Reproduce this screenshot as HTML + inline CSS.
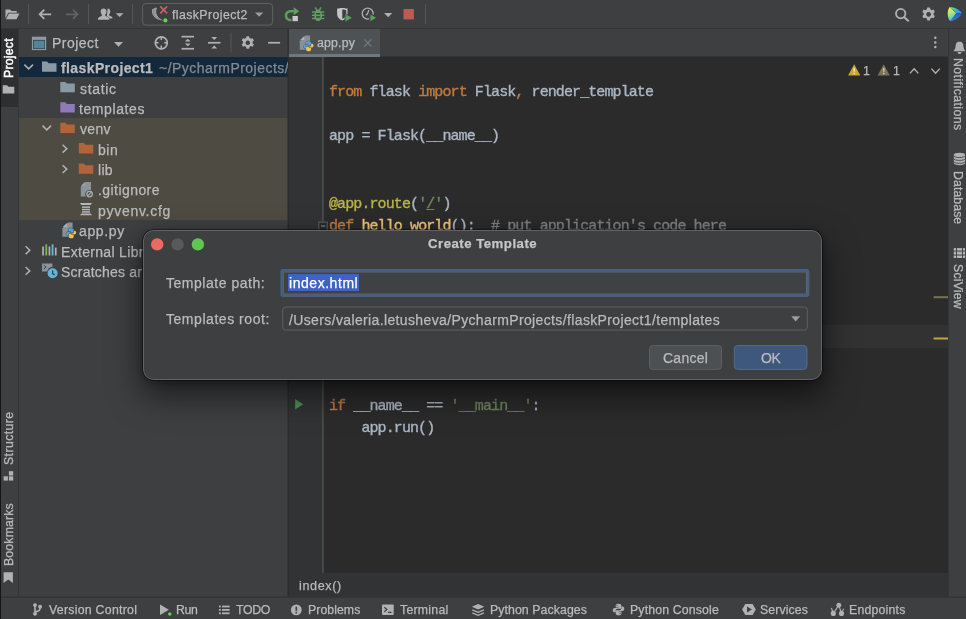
<!DOCTYPE html>
<html lang="en"><head><meta charset="utf-8"><title>flaskProject1 – app.py</title>
<style>
html,body{margin:0;padding:0;overflow:hidden}
html{width:966px;height:619px;background:#3d3f41}
body{width:966px;height:619px;overflow:hidden;background:#3d3f41;position:relative;font-family:"Liberation Sans",sans-serif;color:#bbbbbb}
.b{position:absolute}
.t{position:absolute;white-space:pre;line-height:20px;height:20px;will-change:transform;-webkit-text-stroke:0.25px}
.m{position:absolute;white-space:pre;font-family:"Liberation Mono",monospace;font-size:15px;letter-spacing:-0.9px;line-height:22.44px;height:22.44px;color:#acb7c5;left:328.5px;will-change:transform;-webkit-text-stroke:0.35px}
svg{position:absolute;left:0;top:0;overflow:visible}
</style></head><body>
<div class="b" style="left:0px;top:0px;width:1px;height:619px;background:#151516;"></div>
<div class="b" style="left:0px;top:28px;width:966px;height:1px;background:#343638;"></div>
<div class="b" style="left:1px;top:29px;width:17px;height:77.6px;background:#2d2f30;"></div>
<div class="b" style="left:18px;top:29px;width:1px;height:568px;background:#333637;"></div>
<div class="b" style="left:19px;top:56.8px;width:268.5px;height:20.38px;background:#14283c;"></div>
<div class="b" style="left:19px;top:117.94px;width:268.5px;height:101.9px;background:#4e4b42;"></div>
<div class="b" style="left:288px;top:29px;width:92px;height:25px;background:#4f5254;"></div>
<div class="b" style="left:288px;top:54px;width:92px;height:3px;background:#70787f;"></div>
<div class="b" style="left:380px;top:56px;width:568.5px;height:1px;background:#323435;"></div>
<div class="b" style="left:288px;top:57px;width:660px;height:516px;background:#2b2b2b;"></div>
<div class="b" style="left:288px;top:57px;width:34.5px;height:516px;background:#313335;"></div>
<div class="b" style="left:323.4px;top:325.2px;width:625.1px;height:22.6px;background:#323232;"></div>
<div class="b" style="left:288px;top:573px;width:660px;height:24px;background:#313335;"></div>
<div class="b" style="left:948px;top:29px;width:1px;height:568px;background:#333537;"></div>
<div class="b" style="left:0px;top:0px;width:1px;height:619px;background:#151516;"></div>
<div class="m" style="top:81.54px"><span style="color:#c07c41">from</span> flask <span style="color:#c07c41">import</span> Flask<span style="color:#c07c41">,</span> render_template</div>
<div class="m" style="top:126.42px">app = Flask(__name__)</div>
<div class="m" style="top:193.74px"><span style="color:#bab547">@app.route</span>(<span style="color:#70865e">&#x27;</span><span style="color:#70865e;text-decoration:underline">/</span><span style="color:#70865e">&#x27;</span>)</div>
<div class="m" style="top:216.18px"><span style="color:#c07c41">def</span> <span style="color:#f6c87b">hello_world</span>():  <span style="color:#808080"># put application&#x27;s code here</span></div>
<div class="m" style="top:238.62px">    <span style="color:#c07c41">return </span><span style="color:#70865e">&#x27;Hello World!&#x27;</span></div>
<div class="m" style="top:305.94px"><span style="color:#bab547">@app.route</span>(<span style="color:#70865e">&#x27;/index&#x27;</span>)</div>
<div class="m" style="top:328.38px"><span style="color:#c07c41">def</span> <span style="color:#f6c87b">index</span>():</div>
<div class="m" style="top:350.82px">    <span style="color:#c07c41">return </span>render_template(<span style="color:#70865e">&#x27;index.html&#x27;</span>)</div>
<div class="m" style="top:395.70px"><span style="color:#c07c41">if</span> __name__ == <span style="color:#70865e">&#x27;__main__&#x27;</span>:</div>
<div class="m" style="top:418.14px">    app.run()</div>
<svg width="966" height="619" viewBox="0 0 966 619">
<defs>
<linearGradient id="spA" x1="0.2" y1="0" x2="0.5" y2="1"><stop offset="0" stop-color="#f4f04a"/><stop offset="0.45" stop-color="#b4e37c"/><stop offset="1" stop-color="#3cc0e2"/></linearGradient><linearGradient id="spB" x1="0" y1="0" x2="1" y2="0.6"><stop offset="0" stop-color="#9be45e"/><stop offset="0.5" stop-color="#45b8b4"/><stop offset="1" stop-color="#3194e4"/></linearGradient><linearGradient id="spC" x1="0.3" y1="0" x2="0.2" y2="1"><stop offset="0" stop-color="#2a5cbd"/><stop offset="1" stop-color="#2f86dc"/></linearGradient><linearGradient id="spg" x1="0" y1="0" x2="1" y2="0.35"><stop offset="0" stop-color="#d8e84a"/><stop offset="0.3" stop-color="#7fd46a"/><stop offset="0.55" stop-color="#1fb3a6"/><stop offset="0.8" stop-color="#2a86d8"/><stop offset="1" stop-color="#2a6fd0"/></linearGradient>
<g id="fold"><path d="M0,1.2 h5 l1.6,1.7 h7.9 v8.6 h-14.5 z"/></g>
<g id="chevD"><path d="M0,0 l4.3,4.3 l4.3,-4.3" fill="none" stroke="#afb1b3" stroke-width="1.5"/></g>
<g id="chevR"><path d="M0,0 l4.2,3.9 l-4.2,3.9" fill="none" stroke="#afb1b3" stroke-width="1.5"/></g>
<g id="py"><path d="M4.9,0 C3.1,0 2.5,0.8 2.5,1.8 V3.2 H5 V3.7 H1.6 C0.5,3.7 0,4.6 0,5.6 C0,6.6 0.5,7.5 1.6,7.5 H2.5 V6.1 C2.5,5.1 3.3,4.4 4.3,4.4 H6.6 C7.3,4.4 7.5,3.8 7.5,3.2 V1.8 C7.5,0.8 6.7,0 4.9,0 Z" fill="#609dd3"/><path d="M4.9,0 C3.1,0 2.5,0.8 2.5,1.8 V3.2 H5 V3.7 H1.6 C0.5,3.7 0,4.6 0,5.6 C0,6.6 0.5,7.5 1.6,7.5 H2.5 V6.1 C2.5,5.1 3.3,4.4 4.3,4.4 H6.6 C7.3,4.4 7.5,3.8 7.5,3.2 V1.8 C7.5,0.8 6.7,0 4.9,0 Z" fill="#eac450" transform="translate(10,10) rotate(180)"/></g>
<g id="pyfile"><path d="M5.6,0 h4.65 v14.2 h-10.25 v-8.6 z" fill="#87929a" stroke="none"/><path d="M0.4,4.5 h4.1 v-4.1 z" fill="#a9b2b8" stroke="none"/><g transform="translate(3.8,5.6) scale(1.0)" stroke-width="0.9" paint-order="stroke"><use href="#py"/></g></g>
<g id="gear"><path d="M-1.3,-6.6 h2.6 l0.35,1.75 a5,5 0 0 1 1.45,0.85 l1.7,-0.6 l1.3,2.25 l-1.35,1.15 a5,5 0 0 1 0,1.7 l1.35,1.15 l-1.3,2.25 l-1.7,-0.6 a5,5 0 0 1 -1.45,0.85 l-0.35,1.75 h-2.6 l-0.35,-1.75 a5,5 0 0 1 -1.45,-0.85 l-1.7,0.6 l-1.3,-2.25 l1.35,-1.15 a5,5 0 0 1 0,-1.7 l-1.35,-1.15 l1.3,-2.25 l1.7,0.6 a5,5 0 0 1 1.45,-0.85 z M0,-2.3 a2.3,2.3 0 1 0 0.001,0 z" fill="#afb1b3" fill-rule="evenodd"/></g>
</defs>

<rect x="287.5" y="29" width="1.35" height="568" fill="#2c2c2d"/>
<rect x="1" y="596.4" width="965" height="1.5" fill="#333537"/>
<!-- ===== main toolbar ===== -->
<g fill="#afb1b3">
<path d="M5.5,9.4 h4.6 l1.4,1.5 h5.3 v1.9 h-8.6 l-2.7,5.6 z"/>
<path d="M8.9,13.6 h10.6 l-3,5.6 h-10.6 z"/>
</g>
<g stroke="#55585a" stroke-width="1"><path d="M28.5,4.3 V24.2 M88.5,4.3 V24.2 M132.5,4.3 V24.2 M425.5,4.3 V24.2"/></g>
<path d="M51.2,14.3 H39.8 M44.3,9.7 L39.6,14.3 L44.3,18.9" fill="none" stroke="#afb1b3" stroke-width="1.8"/>
<path d="M66,14.3 H77.4 M72.9,9.7 L77.6,14.3 L72.9,18.9" fill="none" stroke="#5f6365" stroke-width="1.8"/>
<!-- users -->
<g>
<path d="M107.6,8.5 c1.7,0 2.7,1.2 2.7,2.9 c0,1.3 -0.6,2.4 -1.3,3 c0,0.8 0.4,1.1 1.4,1.5 c1.4,0.6 2.2,1.2 2.2,2.7 h-6 z" fill="#afb1b3"/>
<path d="M103.6,8.5 c1.8,0 2.9,1.3 2.9,3.1 c0,1.4 -0.6,2.6 -1.4,3.2 c0,0.9 0.5,1.3 1.7,1.8 c1.7,0.7 2.6,1.4 2.6,3.1 h-11.6 c0,-1.7 0.9,-2.4 2.6,-3.1 c1.2,-0.5 1.7,-0.9 1.7,-1.8 c-0.8,-0.6 -1.4,-1.8 -1.4,-3.2 c0,-1.8 1.1,-3.1 2.9,-3.1 z" fill="#afb1b3" stroke="#3d3f41" stroke-width="0.9" paint-order="stroke"/>
</g>
<path d="M115.7,13.2 h7.8 l-3.9,3.8 z" fill="#afb1b3"/>
<!-- run config box -->
<rect x="142.6" y="3.5" width="130" height="21.6" rx="3.2" fill="none" stroke="#5f6263" stroke-width="1"/>
<!-- flask horn -->
<path d="M152.4,8.9 c-0.9,2 -0.5,4.6 1,6.8 c2,2.9 5.4,4.6 9.9,4.7 c-3.4,-1.4 -5.6,-3.5 -6.6,-6 c-0.9,-2.3 -0.7,-4.6 0.3,-6.3 c-0.4,-0.5 -1,-0.8 -1.6,-0.7 c-0.5,0.8 -1.7,1.4 -3,1.5 z" fill="#a3a6a8"/>
<path d="M153.6,9.6 c-0.6,1.7 -0.2,3.7 0.9,5.4 c1.3,1.9 3.3,3.3 5.9,4.2" fill="none" stroke="#6b6e70" stroke-width="0.55"/>
<path d="M155.2,8.6 c-0.7,1.9 -0.4,3.9 0.5,5.6" fill="none" stroke="#74777a" stroke-width="0.5"/>
<path d="M160.3,6.4 l6.8,6.9 M167.1,6.4 l-6.8,6.9" stroke="#cb6063" stroke-width="1.7" fill="none"/>
<circle cx="165.4" cy="20.4" r="2.05" fill="#62d64a"/>
<path d="M255,12.4 h8.3 l-4.15,4.3 z" fill="#9a9da1"/>
<!-- rerun -->
<path d="M293.9,11.3 h-3.4 a4.35,4.35 0 1 0 0.9,8.55" fill="none" stroke="#5d9f5c" stroke-width="2.5"/>
<path d="M293.7,7.2 l5.5,4.1 l-5.5,3.9 z" fill="#5d9f5c"/>
<rect x="292.5" y="16" width="5.4" height="5.2" fill="#c9c9c9"/>
<!-- bug -->
<g stroke="#5d9f5c" stroke-width="1.5" fill="none"><path d="M312,12.1 H324.3 M312,15.3 H324.3 M312,18.6 H324.3 M315.2,7.4 L317,10.4 M321,7.4 L319.2,10.4"/></g>
<ellipse cx="318.15" cy="15.4" rx="3.9" ry="5.9" fill="#5d9f5c"/>
<rect x="316.1" y="13" width="4.1" height="1.5" fill="#3d3f41"/><rect x="316.1" y="16.2" width="4.1" height="1.5" fill="#3d3f41"/>
<!-- coverage -->
<path d="M337.1,8.6 c1.6,0 2.4,-0.2 3.1,-0.7 h4.2 c0.7,0.5 1.5,0.7 3.1,0.7 v5.5 c0,3.2 -2.2,5.3 -5.2,6.5 c-3,-1.2 -5.2,-3.3 -5.2,-6.5 z" fill="#c3c5c6"/>
<path d="M342.3,9.4 h1.8 c0.6,0.4 1.3,0.6 2.1,0.6 v4.1 c0,2.2 -1.4,3.8 -3.9,4.9 z" fill="#3d3f41"/>
<path d="M345,13.4 l7.5,4.4 l-7.5,4.5 z" fill="#5d9f5c" stroke="#3d3f41" stroke-width="0.8"/>
<!-- profile -->
<circle cx="367.7" cy="13.6" r="5.5" fill="none" stroke="#afb1b3" stroke-width="1.3"/>
<path d="M368.9,10 L367.5,13.8 L365.9,15.3" fill="none" stroke="#afb1b3" stroke-width="1.2"/>
<path d="M369.8,13.4 l7.5,4.4 l-7.5,4.5 z" fill="#5d9f5c" stroke="#3d3f41" stroke-width="1.2"/>
<path d="M384.1,13.1 h8.2 l-4.1,4.1 z" fill="#afb1b3"/>
<rect x="403.5" y="9" width="10.4" height="10.4" fill="#bf5a52"/>
<!-- search -->
<circle cx="900.7" cy="13.6" r="4.7" fill="none" stroke="#afb1b3" stroke-width="1.8"/>
<path d="M904.2,17.2 L908.7,21.3" stroke="#afb1b3" stroke-width="2" fill="none"/>
<g transform="translate(928.6,14.3) scale(1.03)"><use href="#gear"/></g>
<!-- space logo -->
<path d="M949.6,6.9 C948.3,8.6 947.6,11.3 947.7,14 C947.8,16.7 948.6,19.5 950.2,21.2 L956.3,13.2 Z" fill="url(#spA)"/>
<path d="M949.6,6.9 C954.5,7 959.4,9.6 962.1,13.2 L956.3,13.2 Z" fill="url(#spB)"/>
<path d="M962.1,13.2 C959.6,17.4 954.9,20.6 950.2,21.2 L956.3,13.2 Z" fill="url(#spC)"/>
<!-- ===== project header ===== -->
<rect x="31.9" y="36.7" width="14.3" height="13.4" fill="#8c9aa4"/>
<rect x="33.1" y="39.9" width="11.9" height="9" fill="#3d3f41"/>
<rect x="33.9" y="40.7" width="10.5" height="7.5" fill="#51849d"/>
<path d="M114,42 h9 l-4.5,4.7 z" fill="#afb1b3"/>
<circle cx="161.3" cy="42.8" r="6" fill="none" stroke="#afb1b3" stroke-width="1.7"/>
<path d="M161.3,36.3 V40 M161.3,49.3 V45.6 M154.8,42.8 H158.5 M167.8,42.8 H164.1" stroke="#afb1b3" stroke-width="1.5" fill="none"/>
<g fill="#afb1b3">
<rect x="181.5" y="35.8" width="12.5" height="1.7"/><rect x="181.5" y="47.9" width="12.5" height="1.7"/>
<path d="M187.75,38.8 l2.9,2.7 h-5.8 z M187.75,46.3 l2.9,-2.7 h-5.8 z"/>
<rect x="208" y="41.9" width="12.5" height="1.7"/>
<path d="M214.25,40 l2.9,-3 h-5.8 z M214.25,45.5 l2.9,3 h-5.8 z"/>
<rect x="268.1" y="41.9" width="12" height="1.7"/>
</g>
<path d="M231,32.6 V52.5" stroke="#55585a" stroke-width="1"/>
<g transform="translate(247.8,42.8)"><use href="#gear"/></g>

<!-- ===== tab ===== -->
<g transform="translate(299.8,35.6)" stroke="#4f5254"><use href="#pyfile"/></g>
<path d="M364.3,39.3 l7.1,7.2 M371.4,39.3 l-7.1,7.2" stroke="#6e7d82" stroke-width="1.1" fill="none"/>
<g fill="#afb1b3"><circle cx="935.3" cy="37.8" r="1.25"/><circle cx="935.3" cy="42.4" r="1.25"/><circle cx="935.3" cy="47" r="1.25"/></g>

<!-- ===== inspections widget ===== -->
<path d="M854.2,64.3 l6.1,11.2 h-12.2 z" fill="#cda434"/>
<rect x="853.45" y="67.9" width="1.6" height="3.8" fill="#f3e3b0"/><rect x="853.45" y="72.7" width="1.6" height="1.5" fill="#f3e3b0"/>
<path d="M883.7,64.3 l6.1,11.2 h-12.2 z" fill="#7c745a"/>
<rect x="882.95" y="67.9" width="1.6" height="3.8" fill="#c9c3ad"/><rect x="882.95" y="72.7" width="1.6" height="1.5" fill="#c9c3ad"/>
<path d="M909.9,73.4 l4.2,-4.6 l4.2,4.6" fill="none" stroke="#afb1b3" stroke-width="1.4"/>
<path d="M931.4,68.6 l4.2,4.6 l4.2,-4.6" fill="none" stroke="#afb1b3" stroke-width="1.4"/>

<!-- ===== left strip ===== -->
<path d="M2.7,85.2 h4.3 l1.4,1.5 h5.9 v6.9 h-11.6 z" fill="#afb1b3"/>
<g fill="#afb1b3"><rect x="8.9" y="471.2" width="4.3" height="4.3"/><rect x="3.6" y="476.3" width="4.3" height="4.3"/><rect x="8.9" y="476.3" width="4.3" height="4.3"/></g>
<path d="M3.6,572.2 h9.3 v10.9 l-4.65,-3.6 l-4.65,3.6 z" fill="#afb1b3"/>

<!-- ===== right strip ===== -->
<path d="M959.5,41.6 c-2.4,0 -3.8,1.7 -3.9,4.1 c-0.1,2.3 -0.6,3.6 -1.9,5 v0.5 h11.6 v-0.5 c-1.3,-1.4 -1.8,-2.7 -1.9,-5 c-0.1,-2.4 -1.5,-4.1 -3.9,-4.1 z M957.5,52.1 a2,1.9 0 0 0 4,0 z" fill="#afb1b3"/>
<path d="M953.8,154.7 v8.5 a5.65,2 0 0 0 11.3,0 v-8.5 a5.65,2 0 0 0 -11.3,0 z" fill="#afb1b3"/>
<g stroke="#3d3f41" stroke-width="0.85" fill="none"><path d="M953.6,155.6 a5.8,1.9 0 0 0 11.7,0 M953.6,158.5 a5.8,1.9 0 0 0 11.7,0 M953.6,161.4 a5.8,1.9 0 0 0 11.7,0"/></g>
<g fill="#75787a"><rect x="953.8" y="248.6" width="2.3" height="9"/><rect x="957.0" y="248.6" width="5.0" height="9"/><rect x="962.9" y="248.6" width="2.2" height="9"/></g>
<g fill="#b6b8ba"><rect x="953.8" y="248.2" width="2.3" height="1.95"/><rect x="953.8" y="252.2" width="2.3" height="1.95"/><rect x="953.8" y="256.0" width="2.3" height="1.95"/><rect x="957.0" y="248.2" width="5.0" height="1.95"/><rect x="957.0" y="252.2" width="5.0" height="1.95"/><rect x="957.0" y="256.0" width="5.0" height="1.95"/><rect x="962.9" y="248.2" width="2.2" height="1.95"/><rect x="962.9" y="252.2" width="2.2" height="1.95"/><rect x="962.9" y="256.0" width="2.2" height="1.95"/></g>

<!-- ===== tree ===== -->
<g transform="translate(24.4,64.6)"><use href="#chevD"/></g>
<g transform="translate(42,60.3)" fill="#8a9aa5"><use href="#fold"/></g>
<g transform="translate(60.3,80.7)" fill="#8a9aa5"><use href="#fold"/></g>
<g transform="translate(60.3,101.1)" fill="#8e79b9"><use href="#fold"/></g>
<g transform="translate(42.5,125.6)"><use href="#chevD"/></g>
<g transform="translate(60.3,121.5)" fill="#b1643a"><use href="#fold"/></g>
<g transform="translate(62.6,144.8)"><use href="#chevR"/></g>
<g transform="translate(78.8,141.9)" fill="#b1643a"><use href="#fold"/></g>
<g transform="translate(62.6,165.2)"><use href="#chevR"/></g>
<g transform="translate(78.8,162.3)" fill="#b1643a"><use href="#fold"/></g>
<!-- .gitignore -->
<path d="M85.4,182.1 h5.6 v8.3 a4.3,4.3 0 0 0 -5.3,6.1 h-4.9 v-9.7 z" fill="#8a949b"/><path d="M81,185.8 h3.8 v-3.7 z" fill="#9aa3a9"/>
<circle cx="89.6" cy="194" r="2.75" fill="none" stroke="#a7afb4" stroke-width="1.25"/><path d="M87.7,195.9 l3.8,-3.8" stroke="#a7afb4" stroke-width="1.25"/>
<!-- cfg -->
<g fill="#b4b6b8"><path d="M80,203.1 h12 l-1.4,1.8 h-9.2 z"/><rect x="82" y="206.4" width="8" height="1.5"/><rect x="82" y="208.8" width="8" height="1.5"/><rect x="82" y="211.2" width="8" height="1.5"/><path d="M81.4,213.4 h9.2 l1.4,1.8 h-12 z"/></g>
<!-- app.py -->
<g transform="translate(62.4,222.6)" stroke="#3d3f41"><use href="#pyfile"/></g>
<!-- ext libs -->
<g transform="translate(25.6,246.3)"><use href="#chevR"/></g>
<g><rect x="42.2" y="246.5" width="1.7" height="9" fill="#afb1b3"/><rect x="45.3" y="244.3" width="1.9" height="11.2" fill="#76b353"/><rect x="48.6" y="246.5" width="1.7" height="9" fill="#afb1b3"/><rect x="51.6" y="244.3" width="1.9" height="11.2" fill="#63b4dc"/><rect x="54.9" y="247.6" width="1.7" height="7.9" fill="#afb1b3"/></g>
<!-- scratches -->
<g transform="translate(25.6,267)"><use href="#chevR"/></g>
<path d="M42,263.5 h10.4 v3.6 a5.6,5.6 0 0 0 -5.2,4.4 h-5.2 z" fill="#8a949b"/>
<path d="M43.8,265.2 l2.2,1.9 l-2.2,1.9" stroke="#3d3f41" stroke-width="1" fill="none"/>
<circle cx="52.6" cy="273.3" r="5" fill="#63b4dc"/>
<path d="M52.6,270.3 v3.3 l2.2,1.3" stroke="#3d3f41" stroke-width="1.2" fill="none"/>

<!-- ===== gutter ===== -->
<rect x="933.6" y="296.2" width="14.4" height="2" fill="#7a7258"/><rect x="933.6" y="337.5" width="14.4" height="2" fill="#c9a13a"/>
<rect x="322.1" y="57" width="1.7" height="516" fill="#4d4d4d"/>
<rect x="318.8" y="222.1" width="8.4" height="8.6" fill="#2b2b2b" stroke="#585b5d" stroke-width="1.2"/><path d="M321,226.1 h4.3" stroke="#747474" stroke-width="1.5"/>
<path d="M295.1,399.1 l8.2,5.2 l-8.2,5.2 z" fill="#558f56"/>

<!-- ===== bottom bar ===== -->
<g fill="none" stroke="#afb1b3" stroke-width="1.6"><path d="M35,605.5 V613.5 M35,611.8 c4.6,-0.2 5.1,-2 5.1,-4.6"/></g>
<g fill="#afb1b3"><circle cx="35" cy="605.1" r="1.95"/><circle cx="35" cy="613.8" r="1.95"/><circle cx="40.1" cy="606.8" r="1.95"/></g>
<path d="M160,604.6 l8.9,5.2 l-8.9,5.2 z" fill="#afb1b3"/><circle cx="169.8" cy="613.9" r="2.2" fill="#3d3f41"/><circle cx="169.8" cy="613.9" r="1.75" fill="#62d64a"/>
<g fill="#afb1b3"><rect x="219" y="605.6" width="1.8" height="1.8"/><rect x="222" y="605.6" width="7.6" height="1.8"/><rect x="219" y="609" width="1.8" height="1.8"/><rect x="222" y="609" width="7.6" height="1.8"/><rect x="219" y="612.4" width="1.8" height="1.8"/><rect x="222" y="612.4" width="7.6" height="1.8"/></g>
<circle cx="296.3" cy="609.9" r="5.4" fill="#afb1b3"/><rect x="295.45" y="606.7" width="1.7" height="4" fill="#3d3f41"/><rect x="295.45" y="611.7" width="1.7" height="1.7" fill="#3d3f41"/>
<rect x="382" y="604.5" width="11.7" height="10.6" rx="0.8" fill="#afb1b3"/><path d="M384.3,607.2 l2.6,2.3 l-2.6,2.3 M388,612.3 h3.5" stroke="#3d3f41" stroke-width="1.2" fill="none"/>
<g fill="#afb1b3"><path d="M478.1,604 l6.2,2.7 l-6.2,2.7 l-6.2,-2.7 z"/></g>
<g fill="none" stroke="#afb1b3" stroke-width="1.3"><path d="M472.3,609.8 l5.8,2.5 l5.8,-2.5 M472.3,612.8 l5.8,2.5 l5.8,-2.5"/></g>
<g transform="translate(612.8,603.7) scale(1.15)"><path d="M4.9,0 C3.1,0 2.5,0.8 2.5,1.8 V3.2 H5 V3.7 H1.6 C0.5,3.7 0,4.6 0,5.6 C0,6.6 0.5,7.5 1.6,7.5 H2.5 V6.1 C2.5,5.1 3.3,4.4 4.3,4.4 H6.6 C7.3,4.4 7.5,3.8 7.5,3.2 V1.8 C7.5,0.8 6.7,0 4.9,0 Z" fill="#afb1b3"/><path d="M4.9,0 C3.1,0 2.5,0.8 2.5,1.8 V3.2 H5 V3.7 H1.6 C0.5,3.7 0,4.6 0,5.6 C0,6.6 0.5,7.5 1.6,7.5 H2.5 V6.1 C2.5,5.1 3.3,4.4 4.3,4.4 H6.6 C7.3,4.4 7.5,3.8 7.5,3.2 V1.8 C7.5,0.8 6.7,0 4.9,0 Z" fill="#afb1b3" transform="translate(10,10) rotate(180)"/><circle cx="3.7" cy="1.6" r="0.55" fill="#3d3f41"/><circle cx="6.3" cy="8.4" r="0.55" fill="#3d3f41"/></g>
<path d="M745.3,603.9 h7.3 l3.2,5.6 l-3.2,5.6 h-7.3 l-3.2,-5.6 z" fill="#afb1b3"/><path d="M747,606.4 l4.9,3.1 l-4.9,3.1 z" fill="#3d3f41"/>
<g stroke="#afb1b3" stroke-width="1.1" fill="none"><path d="M833.3,613.4 L838.8,605.3 L841.5,613.4 M831.4,608 L833.3,613.4 M843.6,608.6 L841.5,613.4"/></g>
<g fill="#afb1b3"><circle cx="838.8" cy="605.3" r="2.45"/><circle cx="833.3" cy="613.4" r="2.55"/><circle cx="841.5" cy="613.4" r="2.55"/></g>
</svg>
<div class="t" style="font-size:12.3px;color:#bbbbbb;letter-spacing:0.417px;left:171.70px;top:4.64px;">flaskProject2</div>
<div class="t" style="font-size:14px;color:#bbbbbb;letter-spacing:0.471px;left:52.00px;top:33.25px;">Project</div>
<div class="t" style="font-size:12.3px;color:#bbbbbb;letter-spacing:0.196px;left:317.30px;top:32.94px;">app.py</div>
<div class="t" style="font-size:12.3px;color:#bbbbbb;left:863.40px;top:60.94px;">1</div>
<div class="t" style="font-size:12.3px;color:#bbbbbb;left:893.00px;top:60.94px;">1</div>
<div class="t" style="font-size:12.6px;color:#bbbbbb;letter-spacing:0.618px;left:298.60px;top:576.13px;">index()</div>
<div class="t" style="font-size:14px;color:#bbbbbb;font-weight:bold;letter-spacing:0.395px;left:60.90px;top:58.14px;">flaskProject1</div>
<div class="t" style="font-size:14px;color:#848b91;letter-spacing:0.461px;left:158.60px;top:58.14px;width:128.8px;overflow:hidden;">~/PycharmProjects/</div>
<div class="t" style="font-size:14.0px;color:#bbbbbb;letter-spacing:0.685px;left:79.50px;top:78.52px;">static</div>
<div class="t" style="font-size:14.0px;color:#bbbbbb;letter-spacing:0.588px;left:79.20px;top:98.90px;">templates</div>
<div class="t" style="font-size:14.0px;color:#bbbbbb;letter-spacing:0.343px;left:79.50px;top:119.28px;">venv</div>
<div class="t" style="font-size:14.0px;color:#bbbbbb;letter-spacing:0.559px;left:97.90px;top:139.66px;">bin</div>
<div class="t" style="font-size:14.0px;color:#bbbbbb;letter-spacing:0.297px;left:97.90px;top:160.04px;">lib</div>
<div class="t" style="font-size:14.0px;color:#bbbbbb;letter-spacing:0.434px;left:97.90px;top:180.42px;">.gitignore</div>
<div class="t" style="font-size:14.0px;color:#bbbbbb;letter-spacing:0.713px;left:97.90px;top:200.80px;">pyvenv.cfg</div>
<div class="t" style="font-size:14.0px;color:#bbbbbb;letter-spacing:0.633px;left:79.20px;top:221.18px;">app.py</div>
<div class="t" style="font-size:14.0px;color:#bbbbbb;letter-spacing:0.317px;left:61.20px;top:241.56px;">External Libr</div>
<div class="t" style="font-size:14.0px;color:#bbbbbb;letter-spacing:0.210px;left:61.20px;top:261.94px;">Scratches ar</div>
<div class="t" style="font-size:12.3px;color:#bbbbbb;letter-spacing:0.273px;left:48.80px;top:600.34px;">Version Control</div>
<div class="t" style="font-size:12.3px;color:#bbbbbb;letter-spacing:-0.300px;left:176.00px;top:600.34px;">Run</div>
<div class="t" style="font-size:12.3px;color:#bbbbbb;letter-spacing:-0.300px;left:235.70px;top:600.34px;">TODO</div>
<div class="t" style="font-size:12.3px;color:#bbbbbb;letter-spacing:0.052px;left:307.70px;top:600.34px;">Problems</div>
<div class="t" style="font-size:12.3px;color:#bbbbbb;letter-spacing:0.262px;left:399.80px;top:600.34px;">Terminal</div>
<div class="t" style="font-size:12.3px;color:#bbbbbb;letter-spacing:0.085px;left:489.80px;top:600.34px;">Python Packages</div>
<div class="t" style="font-size:12.3px;color:#bbbbbb;letter-spacing:0.153px;left:629.80px;top:600.34px;">Python Console</div>
<div class="t" style="font-size:12.3px;color:#bbbbbb;letter-spacing:0.107px;left:760.20px;top:600.34px;">Services</div>
<div class="t" style="font-size:12.3px;color:#bbbbbb;letter-spacing:0.201px;left:848.60px;top:600.34px;">Endpoints</div>
<div class="t" style="font-size:12.3px;color:#ffffff;letter-spacing:0.221px;-webkit-text-stroke:0.45px;left:-1.36px;top:77.50px;transform-origin:0 0;transform:rotate(-90deg);">Project</div>
<div class="t" style="font-size:12.3px;color:#bbbbbb;letter-spacing:0.401px;left:-1.36px;top:464.60px;transform-origin:0 0;transform:rotate(-90deg);">Structure</div>
<div class="t" style="font-size:12.3px;color:#bbbbbb;letter-spacing:0.150px;left:-1.36px;top:566.00px;transform-origin:0 0;transform:rotate(-90deg);">Bookmarks</div>
<div class="t" style="font-size:12.3px;color:#bbbbbb;letter-spacing:0.435px;left:968.16px;top:58.20px;transform-origin:0 0;transform:rotate(90deg);">Notifications</div>
<div class="t" style="font-size:12.3px;color:#bbbbbb;letter-spacing:0.080px;left:968.16px;top:170.50px;transform-origin:0 0;transform:rotate(90deg);">Database</div>
<div class="t" style="font-size:12.3px;color:#bbbbbb;letter-spacing:0.181px;left:968.16px;top:263.80px;transform-origin:0 0;transform:rotate(90deg);">SciView</div>
<div class="b" style="left:143px;top:230.3px;width:679.4px;height:150.2px;border-radius:10.5px;background:#3d3f41;box-shadow:0 0 0 0.6px rgba(0,0,0,.75),0 14px 32px 2px rgba(0,0,0,.55),0 2px 10px rgba(0,0,0,.3)"></div>
<div class="b" style="left:143px;top:230.3px;width:677.4px;height:148.2px;border-radius:10.5px;border:1px solid rgba(255,255,255,.19)"></div>
<svg width="966" height="619" viewBox="0 0 966 619">
<circle cx="157.2" cy="244.4" r="6.2" fill="#ec6a5e"/>
<circle cx="177.6" cy="244.4" r="6.2" fill="#58595b"/>
<circle cx="197.9" cy="244.4" r="6.2" fill="#61c554"/>
<!-- text field (focused) -->
<rect x="281.6" y="270.3" width="526.6" height="25.4" rx="1.5" fill="#3f4244" stroke="#456082" stroke-width="2.4"/>
<rect x="283.3" y="272" width="523.2" height="22" fill="none" stroke="#64676a" stroke-width="1"/>
<!-- combo -->
<rect x="282.7" y="307" width="524.6" height="23" rx="3" fill="#3d3f41" stroke="#5e6062" stroke-width="1"/>
<path d="M791.3,316.3 h8.8 l-4.4,5.2 z" fill="#9a9da1"/>
<!-- buttons -->
<rect x="649.5" y="345.6" width="72" height="23.8" rx="3.3" fill="#4d5052" stroke="#5e6062" stroke-width="1"/>
<rect x="734.3" y="345.6" width="72.6" height="23.8" rx="3.3" fill="#3e577d" stroke="#546f89" stroke-width="1"/>
</svg>
<div class="b" style="left:288.2px;top:274.1px;width:70.4px;height:16.8px;background:#3d64c3;"></div>
<div class="t" style="font-size:13.2px;color:#c4c6c8;font-weight:bold;letter-spacing:0.498px;left:428.00px;top:234.02px;">Create Template</div>
<div class="t" style="font-size:14px;color:#bbbbbb;letter-spacing:0.520px;left:166.30px;top:273.15px;">Template path:</div>
<div class="t" style="font-size:14px;color:#bbbbbb;letter-spacing:0.542px;left:166.30px;top:308.95px;">Templates root:</div>
<div class="t" style="font-size:14px;color:#ffffff;letter-spacing:0.544px;left:288.90px;top:273.05px;">index.html</div>
<div class="t" style="font-size:14px;color:#bbbbbb;letter-spacing:0.366px;left:288.50px;top:310.15px;">/Users/valeria.letusheva/PycharmProjects/flaskProject1/templates</div>
<div class="t" style="font-size:14px;color:#bbbbbb;letter-spacing:0.264px;left:663.30px;top:348.15px;">Cancel</div>
<div class="t" style="font-size:14px;color:#bbbbbb;letter-spacing:-0.300px;left:761.10px;top:348.15px;">OK</div>
</body></html>
